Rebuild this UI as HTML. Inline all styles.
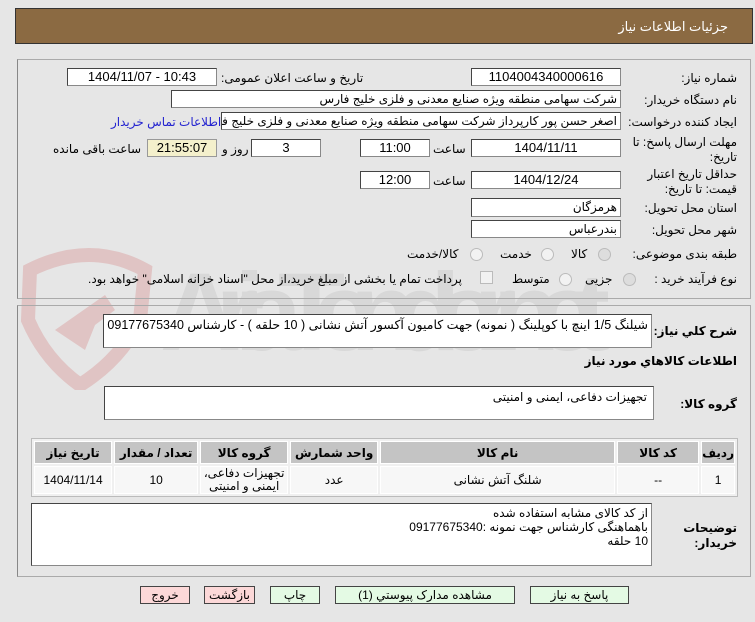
<!DOCTYPE html>
<html><head><meta charset="utf-8"><style>
*{box-sizing:border-box;margin:0;padding:0}
body{width:755px;height:622px;background:#e6e6e6;font-family:"Liberation Sans","DejaVu Sans",sans-serif;font-size:12px;color:#000;position:relative;overflow:hidden}
.a{position:absolute;white-space:nowrap}
.r{direction:rtl;text-align:right}
.in{position:absolute;background:#fff;border:1px solid #444;border-right-color:#888;border-bottom-color:#888;padding:0 3px;line-height:16px;white-space:nowrap;overflow:hidden;direction:rtl;text-align:right}
.c{text-align:center;direction:ltr;font-size:13px}
.b{font-weight:bold}
.rad{position:absolute;width:13px;height:13px;border-radius:50%;border:1px solid #bbb;background:#f2f2f2}
.btn{position:absolute;top:586px;height:18px;border:1px solid #444;text-align:center;line-height:16px;font-size:12px}
td,th{border:1px solid #fff;text-align:center;font-size:12px}
</style></head><body>
<!-- watermark -->
<svg class="a" style="left:0;top:240px" width="620" height="150">
<path d="M30 30 Q90 0 145 30 L140 80 Q120 120 80 145 Q45 120 28 80 Z" fill="none" stroke="#e0c4c4" stroke-width="14"/>
<path d="M55 90 L105 55 L115 70 L95 85 L85 110 Z" fill="#e0c4c4"/>
<text x="160" y="110" font-family="Liberation Sans" font-size="110" font-weight="bold" fill="#d4d4d4" textLength="450" opacity="0.75">AriaTender.net</text>
</svg>
<div class="a" style="left:15px;top:8px;width:738px;height:36px;background:#8b6a42;border:1px solid #333"></div>
<div class="a r" style="right:27px;top:19px;color:#fff;font-size:13px">جزئیات اطلاعات نیاز</div>
<div class="a" style="left:17px;top:59px;width:734px;height:240px;border:1px solid #aaa;border-left-color:#888"></div>
<div class="a" style="left:17px;top:305px;width:734px;height:272px;border:1px solid #aaa;border-left-color:#888"></div>

<div class="a r" style="right:18px;top:71px">شماره نیاز:</div>
<div class="in c" style="left:471px;top:68px;width:150px;height:18px">1104004340000616</div>
<div class="a r" style="left:221px;top:71px">تاریخ و ساعت اعلان عمومی:</div>
<div class="in c" style="left:67px;top:68px;width:150px;height:18px">1404/11/07 - 10:43</div>

<div class="a r" style="right:18px;top:93px">نام دستگاه خریدار:</div>
<div class="in" style="left:171px;top:90px;width:450px;height:18px">شرکت سهامی منطقه ویژه صنایع معدنی و فلزی خلیج فارس</div>

<div class="a r" style="right:18px;top:115px">ایجاد کننده درخواست:</div>
<div class="in" style="left:221px;top:112px;width:400px;height:18px">اصغر حسن پور کارپرداز شرکت سهامی منطقه ویژه صنایع معدنی و فلزی خلیج فارس</div>
<div class="a r" style="left:111px;top:115px;color:#2323d0">اطلاعات تماس خریدار</div>

<div class="a r" style="right:18px;top:135px;line-height:15px">مهلت ارسال پاسخ: تا<br>تاریخ:</div>
<div class="in c" style="left:471px;top:139px;width:150px;height:18px">1404/11/11</div>
<div class="a r" style="left:433px;top:142px">ساعت</div>
<div class="in c" style="left:360px;top:139px;width:70px;height:18px">11:00</div>
<div class="in c" style="left:251px;top:139px;width:70px;height:18px">3</div>
<div class="a r" style="left:222px;top:142px">روز و</div>
<div class="in c" style="left:147px;top:139px;width:70px;height:18px;background:#f4f0cc;border-color:#999">21:55:07</div>
<div class="a r" style="left:53px;top:142px">ساعت باقی مانده</div>

<div class="a r" style="right:18px;top:167px;line-height:15px">حداقل تاریخ اعتبار<br>قیمت: تا تاریخ:</div>
<div class="in c" style="left:471px;top:171px;width:150px;height:18px">1404/12/24</div>
<div class="a r" style="left:433px;top:174px">ساعت</div>
<div class="in c" style="left:360px;top:171px;width:70px;height:18px">12:00</div>

<div class="a r" style="right:18px;top:201px">استان محل تحویل:</div>
<div class="in" style="left:471px;top:198px;width:150px;height:19px">هرمزگان</div>
<div class="a r" style="right:18px;top:223px">شهر محل تحویل:</div>
<div class="in" style="left:471px;top:220px;width:150px;height:18px">بندرعباس</div>

<div class="a r" style="right:18px;top:247px">طبقه بندی موضوعی:</div>
<div class="rad" style="left:598px;top:248px;background:#ddd"></div>
<div class="a r" style="left:571px;top:247px">کالا</div>
<div class="rad" style="left:541px;top:248px"></div>
<div class="a r" style="left:500px;top:247px">خدمت</div>
<div class="rad" style="left:470px;top:248px"></div>
<div class="a r" style="left:407px;top:247px">کالا/خدمت</div>

<div class="a r" style="right:18px;top:272px">نوع فرآیند خرید :</div>
<div class="rad" style="left:623px;top:273px;background:#ddd"></div>
<div class="a r" style="left:585px;top:272px">جزیی</div>
<div class="rad" style="left:559px;top:273px"></div>
<div class="a r" style="left:512px;top:272px">متوسط</div>
<div class="a" style="left:480px;top:271px;width:13px;height:13px;border:1px solid #bbb;background:#f2f2f2"></div>
<div class="a r" style="left:88px;top:272px">پرداخت تمام یا بخشی از مبلغ خرید،از محل "اسناد خزانه اسلامی" خواهد بود.</div>

<div class="a r b" style="right:18px;top:324px">شرح کلي نياز:</div>
<div class="in" style="left:103px;top:314px;width:549px;height:34px;line-height:18px;padding-top:1px;font-size:12.5px">شیلنگ 1/5 اینچ با کوپلینگ ( نمونه) جهت کامیون آکسور آتش نشانی  ( 10 حلقه ) - کارشناس 09177675340</div>
<div class="a r b" style="right:18px;top:354px">اطلاعات کالاهاي مورد نياز</div>
<div class="a r b" style="right:18px;top:397px">گروه کالا:</div>
<div class="in" style="left:104px;top:386px;width:550px;height:34px;line-height:18px;padding:1px 6px">تجهیزات دفاعی، ایمنی و امنیتی</div>

<table class="a" style="left:31px;top:438px;width:707px;height:59px;border:1px solid #bbb;border-collapse:separate;border-spacing:2px;background:#f0f0f0;direction:rtl">
<tr style="height:23px;background:#c4c4c4"><th style="width:27px">ردیف</th><th style="width:82px">کد کالا</th><th style="width:235px">نام کالا</th><th style="width:88px">واحد شمارش</th><th style="width:88px">گروه کالا</th><th style="width:84px">تعداد / مقدار</th><th>تاریخ نیاز</th></tr>
<tr style="background:#f7f7f7;height:28px"><td>1</td><td>--</td><td>شلنگ آتش نشانی</td><td>عدد</td><td style="line-height:13px">تجهیزات دفاعی،<br>ایمنی و امنیتی</td><td>10</td><td>1404/11/14</td></tr>
</table>

<div class="a r b" style="right:18px;top:521px;line-height:15px">توضیحات<br>خریدار:</div>
<div class="in" style="left:31px;top:503px;width:621px;height:63px;line-height:14px;padding:2px 3px">از کد کالای مشابه استفاده شده<br>باهماهنگی کارشناس جهت نمونه :09177675340<br>10 حلقه</div>

<div class="btn" style="left:530px;width:99px;background:#e4fae4">پاسخ به نیاز</div>
<div class="btn" style="left:335px;width:180px;background:#e4fae4">مشاهده مدارک پیوستي (1)</div>
<div class="btn" style="left:270px;width:50px;background:#e4fae4">چاپ</div>
<div class="btn" style="left:204px;width:51px;background:#fcd8d8">بازگشت</div>
<div class="btn" style="left:140px;width:50px;background:#fcd8d8">خروج</div>
</body></html>
